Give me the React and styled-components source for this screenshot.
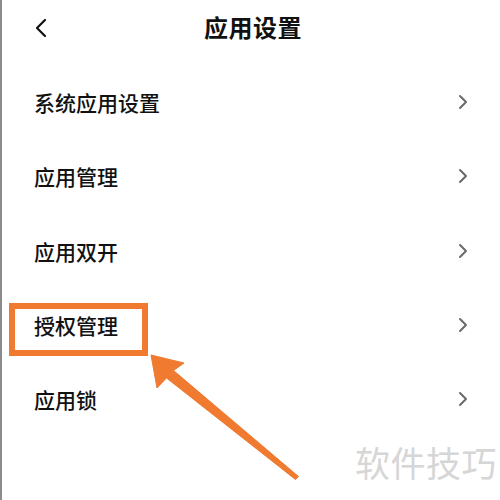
import React from "react";
import styled, { createGlobalStyle } from "styled-components";

const Global = createGlobalStyle`
  html, body { margin: 0; padding: 0; background: #fff; }
  body { font-family: "Noto Sans CJK SC", "Noto Sans", sans-serif; }
`;

const Page = styled.div`
  position: relative;
  width: 500px;
  height: 500px;
  box-sizing: border-box;
  border-left: 2px solid #8c8c8c;
  background: #fff;
  overflow: hidden;
`;

const Header = styled.header`
  height: 52px;
  display: grid;
  grid-template-columns: 1fr auto 1fr;
  align-items: center;
  padding: 0 0 0 29px;
`;

const Back = styled.button`
  justify-self: start;
  width: 20px;
  height: 24px;
  border: 0;
  padding: 0;
  background: none;
  display: flex;
  align-items: center;
  justify-content: center;
  margin-top: 4px;
`;

const Title = styled.h1`
  margin: 0 0 0 -25px;
  font-size: 24px;
  font-weight: 700;
  color: #111;
  letter-spacing: 0.5px;
`;

const List = styled.ul`
  list-style: none;
  margin: 13px 0 0;
  padding: 0 31px 0 32px;
`;

const Row = styled.li`
  height: 74.25px;
  display: flex;
  align-items: center;
  justify-content: space-between;
`;

const Label = styled.span`
  font-size: 21px;
  font-weight: 500;
  color: #111;
`;

const Highlight = styled.div`
  position: absolute;
  left: 7px;
  top: 303px;
  width: 139px;
  height: 53px;
  box-sizing: border-box;
  border: 6px solid #f07a30;
`;

const ArrowSvg = styled.svg`
  position: absolute;
  left: 0;
  top: 0;
  pointer-events: none;
`;

const Watermark = styled.div`
  position: absolute;
  right: 3px;
  bottom: 13px;
  font-size: 35px;
  color: #d6d6d6;
  letter-spacing: 0.5px;
  font-weight: 400;
`;

const Chevron = () => (
  <svg width="12" height="16" viewBox="0 0 12 16">
    <path d="M3 2 L9 8 L3 14" fill="none" stroke="#6a6a6a" strokeWidth="2" strokeLinecap="round" strokeLinejoin="round" />
  </svg>
);

const items = ["系统应用设置", "应用管理", "应用双开", "授权管理", "应用锁"];

export default function App() {
  return (
    <>
      <Global />
      <Page>
        <Header>
          <Back aria-label="back">
            <svg width="16" height="20" viewBox="0 0 16 20">
              <path d="M12 2 L4 10 L12 18" fill="none" stroke="#111" strokeWidth="2.2" strokeLinecap="round" strokeLinejoin="round" />
            </svg>
          </Back>
          <Title>应用设置</Title>
          <span />
        </Header>
        <List>
          {items.map((t) => (
            <Row key={t}>
              <Label>{t}</Label>
              <Chevron />
            </Row>
          ))}
        </List>
        <Highlight />
        <ArrowSvg width="500" height="500" viewBox="0 0 500 500">
          <polygon
            points="149,355 182,363 171.5,370.5 296.5,476.5 293.5,479.5 164.5,378 155,388"
            fill="#f07a30"
            stroke="#f07a30"
            strokeWidth="1"
            strokeLinejoin="round"
          />
        </ArrowSvg>
        <Watermark>软件技巧</Watermark>
      </Page>
    </>
  );
}
